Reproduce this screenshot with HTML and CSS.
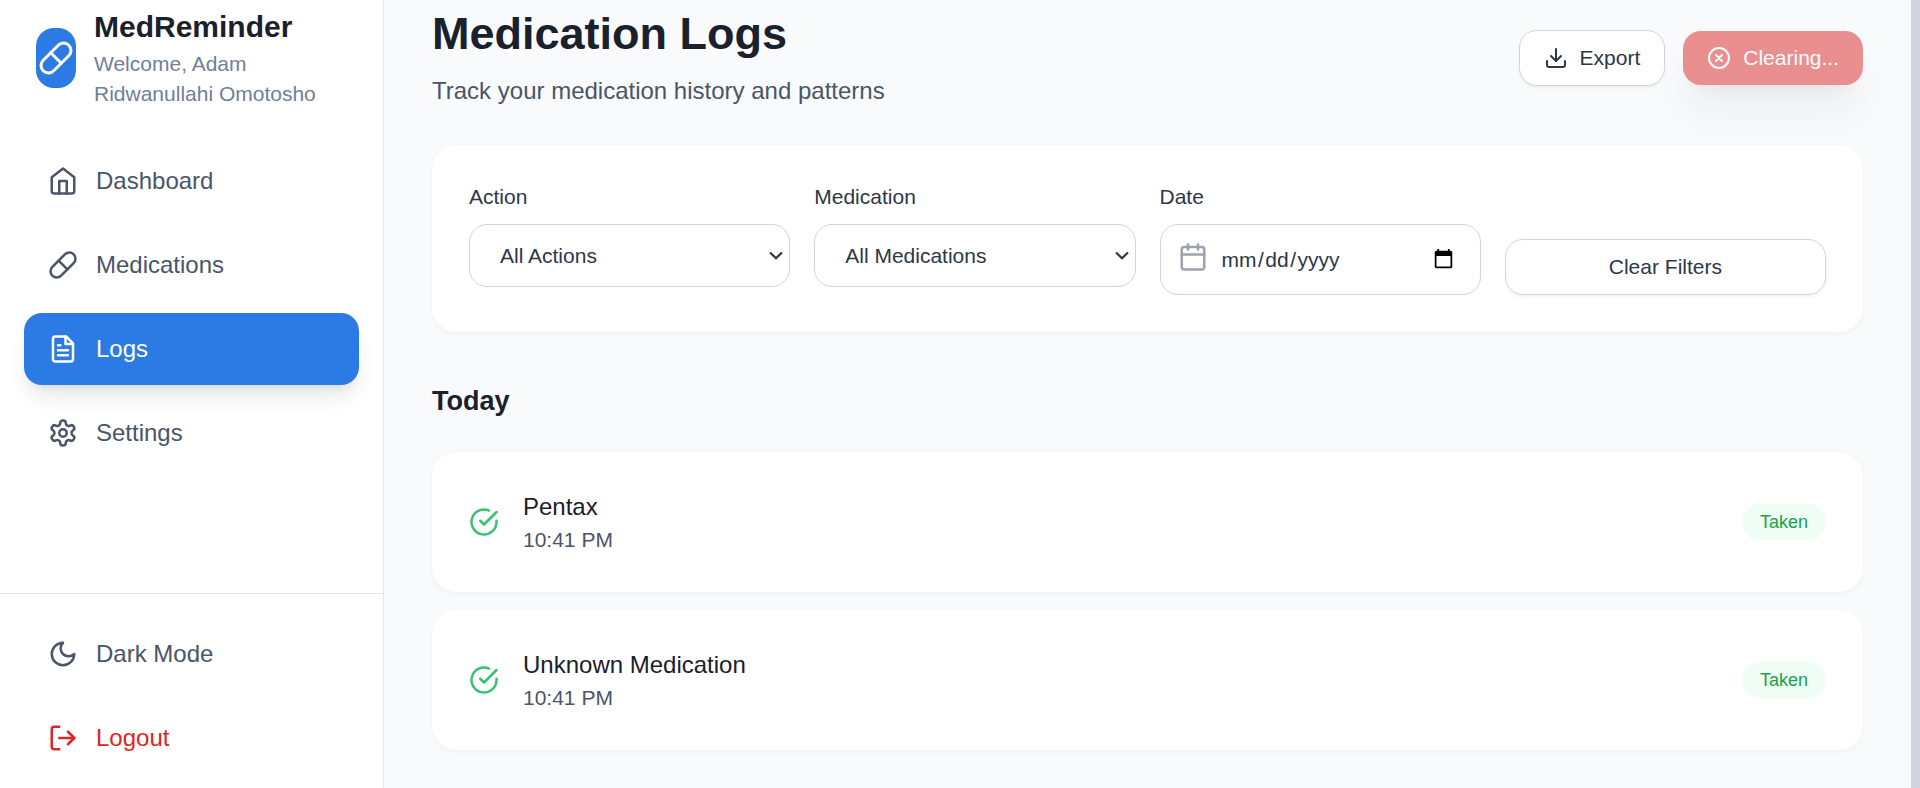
FILE: index.html
```html
<!DOCTYPE html>
<html lang="en">
<head>
<meta charset="utf-8">
<title>MedReminder</title>
<link rel="stylesheet" href="styles.css">
</head>
<body>
<div class="app">
  <aside class="sidebar">
    <div class="brand">
      <div class="brand-logo">
        <svg class="icon icon-lg" viewBox="0 0 24 24"><path d="m10.5 20.5 10-10a4.95 4.95 0 1 0-7-7l-10 10a4.95 4.95 0 1 0 7 7Z"/><path d="m8.5 8.5 7 7"/></svg>
      </div>
      <div>
        <div class="brand-name">MedReminder</div>
        <div class="brand-user">Welcome, Adam<br>Ridwanullahi Omotosho</div>
      </div>
    </div>
    <nav class="nav">
      <a class="nav-item"><svg class="icon" viewBox="0 0 24 24"><path d="m3 9 9-7 9 7v11a2 2 0 0 1-2 2H5a2 2 0 0 1-2-2z"/><polyline points="9 22 9 12 15 12 15 22"/></svg>Dashboard</a>
      <a class="nav-item"><svg class="icon" viewBox="0 0 24 24"><path d="m10.5 20.5 10-10a4.95 4.95 0 1 0-7-7l-10 10a4.95 4.95 0 1 0 7 7Z"/><path d="m8.5 8.5 7 7"/></svg>Medications</a>
      <a class="nav-item active"><svg class="icon" viewBox="0 0 24 24"><path d="M14.5 2H6a2 2 0 0 0-2 2v16a2 2 0 0 0 2 2h12a2 2 0 0 0 2-2V7.5L14.5 2z"/><polyline points="14 2 14 8 20 8"/><path d="M16 13H8M16 17H8M10 9H8"/></svg>Logs</a>
      <a class="nav-item"><svg class="icon" viewBox="0 0 24 24"><path d="M12.22 2h-.44a2 2 0 0 0-2 2v.18a2 2 0 0 1-1 1.73l-.43.25a2 2 0 0 1-2 0l-.15-.08a2 2 0 0 0-2.73.73l-.22.38a2 2 0 0 0 .73 2.73l.15.1a2 2 0 0 1 1 1.72v.51a2 2 0 0 1-1 1.74l-.15.09a2 2 0 0 0-.73 2.73l.22.38a2 2 0 0 0 2.73.73l.15-.08a2 2 0 0 1 2 0l.43.25a2 2 0 0 1 1 1.73V20a2 2 0 0 0 2 2h.44a2 2 0 0 0 2-2v-.18a2 2 0 0 1 1-1.73l.43-.25a2 2 0 0 1 2 0l.15.08a2 2 0 0 0 2.73-.73l.22-.39a2 2 0 0 0-.73-2.73l-.15-.08a2 2 0 0 1-1-1.74v-.5a2 2 0 0 1 1-1.74l.15-.09a2 2 0 0 0 .73-2.73l-.22-.38a2 2 0 0 0-2.73-.73l-.15.08a2 2 0 0 1-2 0l-.43-.25a2 2 0 0 1-1-1.73V4a2 2 0 0 0-2-2z"/><circle cx="12" cy="12" r="3"/></svg>Settings</a>
    </nav>
    <div class="nav nav-bottom">
      <a class="nav-item"><svg class="icon" viewBox="0 0 24 24"><path d="M12 3a6 6 0 0 0 9 9 9 9 0 1 1-9-9Z"/></svg>Dark Mode</a>
      <a class="nav-item danger"><svg class="icon" viewBox="0 0 24 24"><path d="M9 21H5a2 2 0 0 1-2-2V5a2 2 0 0 1 2-2h4"/><polyline points="16 17 21 12 16 7"/><path d="M21 12H9"/></svg>Logout</a>
    </div>
  </aside>

  <main class="main">
    <header class="page-header">
      <div>
        <h1 class="page-title">Medication Logs</h1>
        <p class="page-subtitle">Track your medication history and patterns</p>
      </div>
      <div class="actions">
        <button class="btn btn-outline"><svg class="icon icon-sm" viewBox="0 0 24 24"><path d="M21 15v4a2 2 0 0 1-2 2H5a2 2 0 0 1-2-2v-4"/><polyline points="7 10 12 15 17 10"/><path d="M12 15V3"/></svg>Export</button>
        <button class="btn btn-danger"><svg class="icon icon-sm" viewBox="0 0 24 24"><circle cx="12" cy="12" r="10"/><path d="m15 9-6 6M9 9l6 6"/></svg>Clearing...</button>
      </div>
    </header>

    <section class="card filters">
      <div class="field">
        <span class="label">Action</span>
        <div class="select"><span>All Actions</span><svg class="chevron" viewBox="0 0 14 9"><path d="M1 1.5 7 7.2 13 1.5"/></svg></div>
      </div>
      <div class="field">
        <span class="label">Medication</span>
        <div class="select"><span>All Medications</span><svg class="chevron" viewBox="0 0 14 9"><path d="M1 1.5 7 7.2 13 1.5"/></svg></div>
      </div>
      <div class="field">
        <span class="label">Date</span>
        <div class="date">
          <svg class="icon date-icon" viewBox="0 0 24 24"><rect x="3" y="4" width="18" height="18" rx="2"/><path d="M16 2v4M8 2v4M3 10h18"/></svg>
          <span class="date-text"><span>mm</span><span>/</span><span>dd</span><span>/</span><span>yyyy</span></span>
          <svg class="date-picker" viewBox="0 0 24 24"><path d="M20 3h-1V1h-2v2H7V1H5v2H4c-1.1 0-2 .9-2 2v16c0 1.1.9 2 2 2h16c1.1 0 2-.9 2-2V5c0-1.1-.9-2-2-2zm0 18H4V9h16v12z"/></svg>
        </div>
      </div>
      <button class="btn btn-outline btn-clear">Clear Filters</button>
    </section>

    <h2 class="day">Today</h2>
    <div class="log-list">
      <article class="card log">
        <svg class="icon check" viewBox="0 0 24 24"><path d="M22 11.08V12a10 10 0 1 1-5.93-9.14"/><path d="m9 11 3 3L22 4"/></svg>
        <div class="log-body"><div class="log-name">Pentax</div><div class="log-time">10:41 PM</div></div>
        <span class="badge">Taken</span>
      </article>
      <article class="card log">
        <svg class="icon check" viewBox="0 0 24 24"><path d="M22 11.08V12a10 10 0 1 1-5.93-9.14"/><path d="m9 11 3 3L22 4"/></svg>
        <div class="log-body"><div class="log-name">Unknown Medication</div><div class="log-time">10:41 PM</div></div>
        <span class="badge">Taken</span>
      </article>
    </div>
  </main>
  <div class="scrollbar"></div>
</div>
</body>
</html>
```
FILE: styles.css
```css
* { box-sizing: border-box; }

body {
  margin: 0;
  background: #f9fafc;
  color: #1a202c;
  font-family: "Liberation Sans", Arial, sans-serif;
  font-size: 24px;
  line-height: 36px;
  overflow: hidden;
}

h1, h2, p { margin: 0; }

.app { display: flex; height: 788px; overflow: hidden; }

.icon {
  width: 30px;
  height: 30px;
  flex: none;
  fill: none;
  stroke: currentColor;
  stroke-width: 2;
  stroke-linecap: round;
  stroke-linejoin: round;
}
.icon-sm { width: 24px; height: 24px; }
.icon-lg { width: 36px; height: 36px; }

/* Sidebar */
.sidebar {
  display: flex;
  flex-direction: column;
  flex: none;
  width: 384px;
  background: #fff;
  border-right: 1px solid #e2e5ea;
}
.brand { display: flex; align-items: center; gap: 18px; padding: 7px 36px 0; }
.brand-logo {
  display: flex;
  align-items: center;
  justify-content: center;
  flex: none;
  width: 40px;
  height: 60px;
  border-radius: 18px;
  background: #2c7be5;
  color: #fff;
}
.brand-name { margin-top: -1px; padding-bottom: 1px; font-size: 30px; font-weight: 700; line-height: 42px; }
.brand-user { font-size: 21px; line-height: 30px; color: #718096; white-space: nowrap; }

.nav { display: flex; flex-direction: column; gap: 12px; padding: 36px 24px 0; }
.nav-item {
  display: flex;
  align-items: center;
  flex: none;
  gap: 18px;
  height: 72px;
  padding: 0 24px;
  border-radius: 18px;
  color: #4a5568;
}
.nav-item.active {
  background: #2c7be5;
  color: #fff;
  box-shadow: 0 15px 22.5px -4.5px rgba(0, 0, 0, .1), 0 6px 9px -6px rgba(0, 0, 0, .1);
}
.nav-item.danger { color: #dc2626; }
.nav-bottom { margin-top: 124px; padding-top: 24px; border-top: 1px solid #e5e7eb; }

/* Main column */
.main { flex: 1; min-width: 0; padding: 7px 48px 0; }
.page-header { display: flex; align-items: center; justify-content: space-between; margin-bottom: 36px; }
.page-title { font-size: 45px; line-height: 54px; }
.page-subtitle { margin-top: 12px; color: #4a5568; }
.actions { display: flex; align-items: center; gap: 18px; }

.btn {
  display: flex;
  align-items: center;
  justify-content: center;
  gap: 12px;
  padding: 12px 24px;
  border: 0;
  border-radius: 18px;
  font: 21px/30px "Liberation Sans", Arial, sans-serif;
}
.btn-outline {
  border: 1px solid #d1d5db;
  background: #fff;
  color: #2d3748;
  box-shadow: 0 1.5px 3px rgba(0, 0, 0, .05);
}
.btn-danger {
  background: #dc2626;
  color: #fff;
  opacity: .5;
  box-shadow: 0 30px 37.5px -7.5px rgba(0, 0, 0, .1), 0 12px 15px -9px rgba(0, 0, 0, .1);
}

.card {
  border: 1px solid #fff;
  border-radius: 24px;
  background: #fff;
  padding: 36px;
  box-shadow: 0 1.5px 4.5px rgba(0, 0, 0, .04);
}

.filters { display: grid; grid-template-columns: repeat(4, 1fr); gap: 24px; }
.label { display: block; margin-bottom: 12px; font-size: 21px; line-height: 30px; color: #2d3748; }
.select, .date {
  display: flex;
  align-items: center;
  border: 1px solid #d1d5db;
  border-radius: 18px;
  background: #fff;
  color: #2d3748;
  font-size: 21px;
  line-height: 30px;
}
.select { justify-content: space-between; height: 63px; padding: 0 6px 0 30px; }
.chevron { width: 14px; height: 9px; margin-bottom: 1px; fill: none; stroke: #2d3748; stroke-width: 2.2; }
.date { height: 71px; padding: 0 26px 0 17px; }
.date-icon { color: #9ca3af; margin: 0 14px 5px 0; }
.date-text { display: flex; flex: 1; gap: 1.5px; }
.date-picker { width: 21px; height: 21px; margin-bottom: 2px; fill: #000; }
.btn-clear { align-self: end; }

.day { margin: 48px 0 30px; font-size: 27px; line-height: 42px; }
.log-list { display: flex; flex-direction: column; gap: 18px; }
.log { display: flex; align-items: center; gap: 24px; }
.check { color: #38c172; }
.log-body { flex: 1; }
.log-time { font-size: 21px; line-height: 30px; color: #4a5568; }
.badge {
  padding: 6px 18px;
  border-radius: 18px;
  background: #f0fdf4;
  color: #16a34a;
  font-size: 18px;
  line-height: 24px;
}

.scrollbar { flex: none; width: 9px; background: #d1d4de; }
```
